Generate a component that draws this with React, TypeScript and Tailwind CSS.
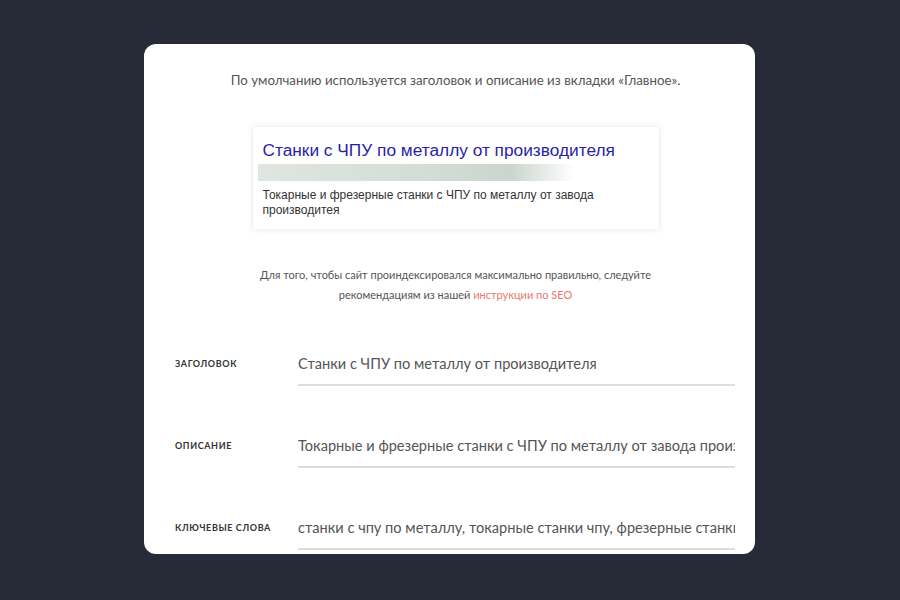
import React from "react";

const geo = { fontFamily: "Lato, 'Noto Sans', sans-serif" } as React.CSSProperties;
const arial = { fontFamily: "'Liberation Sans', Arial, sans-serif" } as React.CSSProperties;

function Row({ label, value, top }: { label: string; value: string; top: string }) {
  return (
    <div className={`flex items-start ${top}`}>
      <div className="w-[123px] shrink-0 h-[40px] flex items-center text-[9px] font-bold tracking-[0.6px] text-[#333] uppercase" style={geo}>
        {label}
      </div>
      <div className="w-[437px] h-[42px] border-b-2 border-[#dedede] flex items-center">
        <input
          readOnly
          value={value}
          className="w-full bg-transparent outline-none p-0 border-0 text-[14.6px] text-[#555]"
          style={geo}
        />
      </div>
    </div>
  );
}

export default function App() {
  return (
    <div className="w-[900px] h-[600px] bg-[#272b37] pt-[44px] pl-[144px]">
      <div className="w-[611px] h-[510px] bg-white rounded-[12px] overflow-hidden flex flex-col">
        <div className="pl-[12px] flex flex-col items-center">
          <p className="mt-[26px] h-[20px] leading-[20px] text-[13.3px] text-[#555]" style={geo}>
            По умолчанию используется заголовок и описание из вкладки «Главное».
          </p>
          <div className="mt-[37px] w-[406px] h-[102px] bg-white shadow-[0_0_6px_rgba(0,0,0,0.12)] pt-[12px] pl-[10px]">
            <div className="text-[17.3px] leading-[22px] text-[#2a1ea6]" style={arial}>
              Станки с ЧПУ по металлу от производителя
            </div>
            <div className="mt-[3px] -ml-[5px] w-[316px] h-[17px] bg-[linear-gradient(90deg,#dfe6e0_0%,#d6ded8_45%,#cbd5cd_80%,#ffffff_100%)]" />
            <div className="mt-[7px] text-[12px] leading-[15px] text-[#333]" style={arial}>
              Токарные и фрезерные станки с ЧПУ по металлу от завода
              <br />
              производитея
            </div>
          </div>
          <p className="mt-[36px] text-center text-[11px] leading-[20px] text-[#555]" style={geo}>
            Для того, чтобы сайт проиндексировался максимально правильно, следуйте
            <br />
            рекомендациям из нашей <span className="text-[#e8786c]">инструкции по SEO</span>
          </p>
        </div>
        <div className="pl-[31px] flex flex-col">
          <Row top="mt-[39px]" label="Заголовок" value="Станки с ЧПУ по металлу от производителя" />
          <Row top="mt-[40px]" label="Описание" value="Токарные и фрезерные станки с ЧПУ по металлу от завода производителя" />
          <Row top="mt-[40px]" label="Ключевые слова" value="станки с чпу по металлу, токарные станки чпу, фрезерные станки по металлу" />
        </div>
      </div>
    </div>
  );
}
